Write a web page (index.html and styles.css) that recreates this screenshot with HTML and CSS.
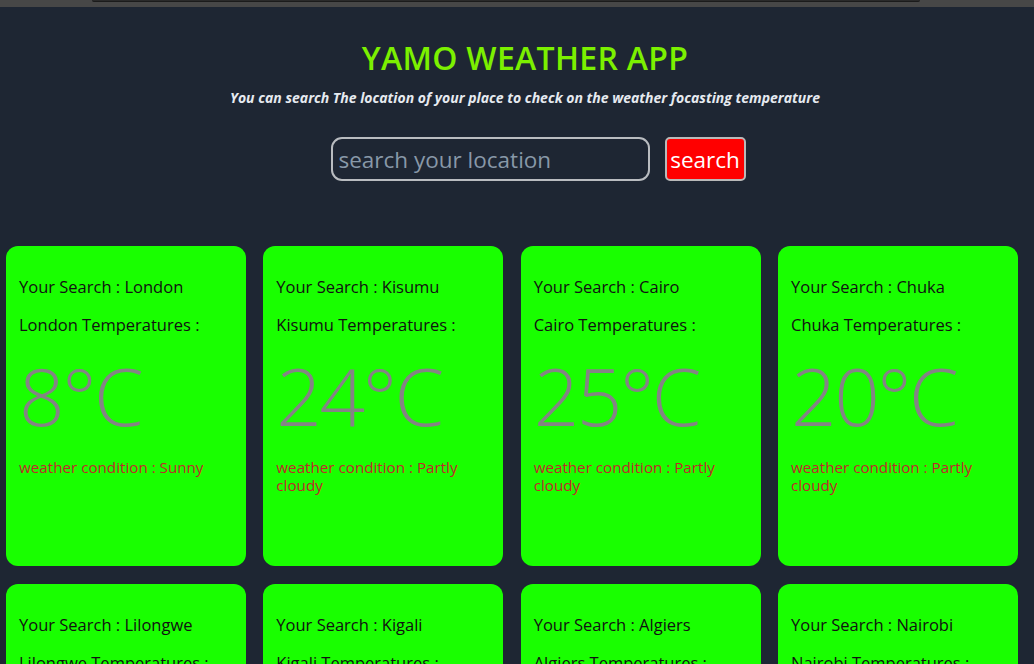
FILE: index.html
```html
<!DOCTYPE html>
<html lang="en">
<head>
<meta charset="utf-8">
<title>YAMO WEATHER APP</title>
<link rel="stylesheet" href="styles.css">
</head>
<body>
<div class="topstrip"><div class="topbar"></div></div>
<header class="header">
  <h1 class="title">YAMO WEATHER APP</h1>
  <p class="subtitle">You can search The location of your place to check on the weather focasting temperature</p>
  <form class="search">
    <input class="search-input" type="text" placeholder="search your location">
    <button class="search-btn" type="button">search</button>
  </form>
</header>
<main class="cards">
  <div class="card">
    <p class="line">Your Search : London</p>
    <p class="line">London Temperatures :</p>
    <p class="temp">8°C</p>
    <p class="cond">weather condition : Sunny</p>
  </div>
  <div class="card">
    <p class="line">Your Search : Kisumu</p>
    <p class="line">Kisumu Temperatures :</p>
    <p class="temp">24°C</p>
    <p class="cond">weather condition : Partly cloudy</p>
  </div>
  <div class="card">
    <p class="line">Your Search : Cairo</p>
    <p class="line">Cairo Temperatures :</p>
    <p class="temp">25°C</p>
    <p class="cond">weather condition : Partly cloudy</p>
  </div>
  <div class="card">
    <p class="line">Your Search : Chuka</p>
    <p class="line">Chuka Temperatures :</p>
    <p class="temp">20°C</p>
    <p class="cond">weather condition : Partly cloudy</p>
  </div>
  <div class="card">
    <p class="line">Your Search : Lilongwe</p>
    <p class="line">Lilongwe Temperatures :</p>
    <p class="temp">22°C</p>
    <p class="cond">weather condition : Sunny</p>
  </div>
  <div class="card">
    <p class="line">Your Search : Kigali</p>
    <p class="line">Kigali Temperatures :</p>
    <p class="temp">21°C</p>
    <p class="cond">weather condition : Partly cloudy</p>
  </div>
  <div class="card">
    <p class="line">Your Search : Algiers</p>
    <p class="line">Algiers Temperatures :</p>
    <p class="temp">18°C</p>
    <p class="cond">weather condition : Sunny</p>
  </div>
  <div class="card">
    <p class="line">Your Search : Nairobi</p>
    <p class="line">Nairobi Temperatures :</p>
    <p class="temp">19°C</p>
    <p class="cond">weather condition : Partly cloudy</p>
  </div>
</main>
</body>
</html>
```
FILE: styles.css
```css
* { box-sizing: border-box; }
html, body { margin: 0; padding: 0; }
body {
  background: #1e2633;
  font-family: "Open Sans", "Noto Sans", sans-serif;
  overflow: hidden;
  height: 664px;
}
.topstrip {
  height: 7px;
  background: #474747;
  padding: 0 114px 0 92px;
}
.topbar {
  height: 2px;
  background: #2a2a2a;
  border-bottom: 1px solid #1b1b1b;
  border-radius: 0 0 2px 2px;
}
.header {
  padding-left: 16px;
  text-align: center;
}
.title {
  margin: 33px 0 0;
  font-size: 32px;
  line-height: 36px;
  font-weight: 600;
  letter-spacing: 0.3px;
  color: #7cf000;
}
.subtitle {
  margin: 13px 0 0;
  font-size: 14px;
  line-height: 18px;
  font-style: italic;
  font-weight: 700;
  color: #e6eaf0;
}
.search {
  margin: 30px 0 0;
  display: flex;
  justify-content: center;
  gap: 15px;
  padding-left: 26px;
}
.search-input {
  width: 319px;
  height: 44px;
  border: 2px solid #b9bcc0;
  border-radius: 11px;
  background: transparent;
  font-family: "Open Sans", sans-serif;
  font-size: 22.5px;
  padding: 0 6px;
  color: #e6eaf0;
  outline: none;
}
.search-input::placeholder { color: #8898a8; }
.search-btn {
  width: 81px;
  height: 44px;
  border: 2px solid #b9b9b9;
  border-radius: 5px;
  background: #ff0000;
  color: #ffffff;
  font-family: "Open Sans", sans-serif;
  font-size: 22.5px;
  padding: 0;
}
.cards {
  margin-top: 65px;
  padding-left: 6px;
  display: grid;
  grid-template-columns: repeat(4, 240px);
  column-gap: 17.33px;
  row-gap: 18px;
}
.card {
  height: 320px;
  background: #19ff00;
  border-radius: 12px;
  padding: 32px 13px 0;
  display: flex;
  flex-direction: column;
}
.line {
  margin: 0;
  font-size: 16.5px;
  line-height: 18px;
  color: #111111;
}
.line + .line { margin-top: 20px; }
.temp {
  margin: 16px 0 0;
  font-size: 80px;
  line-height: 90px;
  font-weight: 300;
  color: #848484;
  letter-spacing: -2.5px;
}
.cond {
  margin: 18px 0 0;
  font-size: 15.2px;
  line-height: 18px;
  color: #c0282a;
}
```
